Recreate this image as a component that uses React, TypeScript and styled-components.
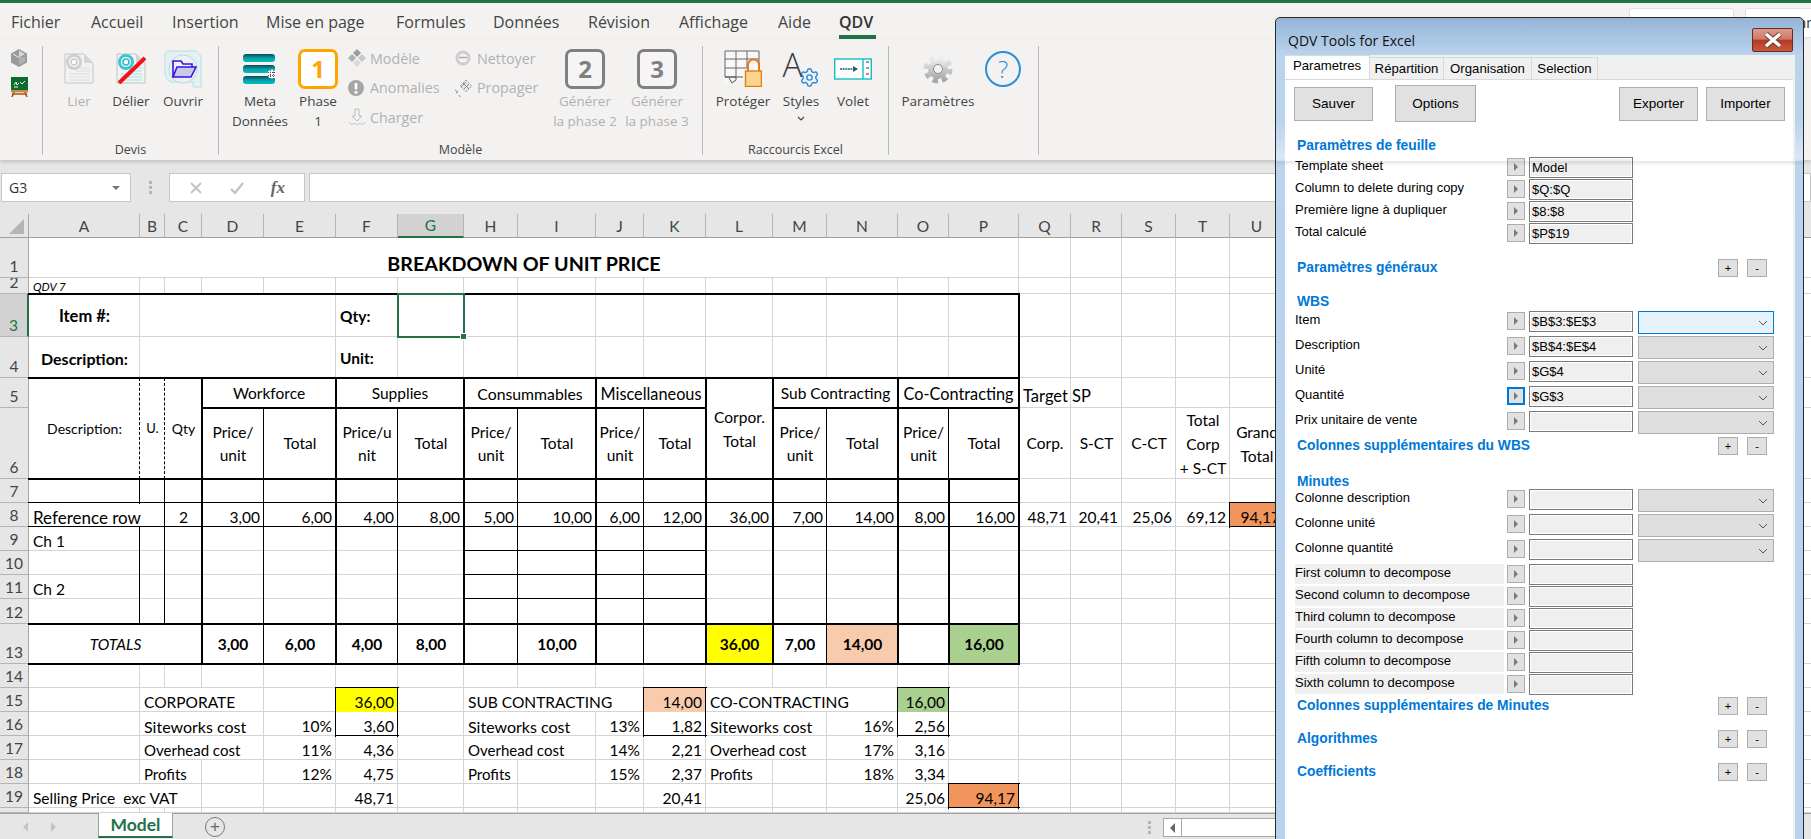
import * as React from 'react';
import styled, { createGlobalStyle, css } from 'styled-components';
import { Settings } from 'lucide-react';

type Edge = 'grid' | 'thin' | 'med' | 'dash' | 'none';
type Align = 'l' | 'r' | 'c';

interface CellDef {
    t?: string;
    a?: Align;
    mid?: boolean;
    b?: boolean;
    i?: boolean;
    size?: number;
    lh?: number;
    fill?: string;
    rs?: number;
    cs?: number;
    selected?: boolean;
}

const GREEN = '#217346';
const ORANGE = '#f0955b';

const COLS = 'ABCDEFGHIJKLMNOPQRSTUVWXYZ'.split('');
const COL_W = [111, 25, 37, 62, 72, 62, 66, 54, 78, 48, 62, 67, 54, 71, 51, 70, 52, 51, 54, 54, 54, 106, 106, 106, 106, 106];
const ROW_H = [40, 16, 43, 41, 30, 71, 24, 24, 24, 24, 24, 25, 40, 24, 24, 24, 24, 24, 24, 5];

const GlobalStyle = createGlobalStyle`
    html, body {
        margin: 0;
        padding: 0;
        overflow: hidden;
        background: #fff;
    }
`;

const Screen = styled.div`
    position: relative;
    width: 1811px;
    height: 839px;
    overflow: hidden;
    display: flex;
    flex-direction: column;
    font-family: 'Open Sans', 'Noto Sans', sans-serif;
`;

const AccentBar = styled.div`
    height: 3px;
    background: ${GREEN};
`;

const MenuRow = styled.div`
    height: 37px;
    background: #f3f2f1;
    display: flex;
    padding-left: 11px;
`;

const MenuTab = styled.div<{ $w: number; $active?: boolean }>`
    position: relative;
    width: ${p => p.$w}px;
    flex: none;
    font-size: 16px;
    line-height: 38px;
    color: ${p => (p.$active ? '#333' : '#444')};
    font-weight: ${p => (p.$active ? 600 : 400)};
    ${p =>
        p.$active &&
        css`
            &::after {
                content: '';
                position: absolute;
                left: 0;
                top: 32px;
                width: 37px;
                height: 4px;
                background: ${GREEN};
            }
        `}
`;

const ShareBox = styled.div<{ $w: number; $ml: number }>`
    width: ${p => p.$w}px;
    margin-left: ${p => p.$ml}px;
    margin-top: 5px;
    height: 30px;
    flex: none;
    background: #fff;
    border: 1px solid #e1dfdd;
    border-radius: 3px;
    box-sizing: border-box;
    font-size: 14px;
    line-height: 28px;
    padding-left: 30px;
    color: #333;
    white-space: nowrap;
    overflow: hidden;
`;

const Ribbon = styled.div`
    position: relative;
    z-index: 5;
    height: 120px;
    background: #f3f2f1;
    display: flex;
    padding-top: 6px;
    box-sizing: border-box;
    box-shadow: 0 2px 4px rgba(0, 0, 0, 0.16);
`;

const Group = styled.div<{ $w: number }>`
    width: ${p => p.$w}px;
    height: 109px;
    flex: none;
    box-sizing: border-box;
    border-right: 1px solid #b9b9b9;
    display: flex;
    flex-direction: column;
`;

const GroupBody = styled.div<{ $pl: number }>`
    flex: 1;
    display: flex;
    padding-left: ${p => p.$pl}px;
`;

const GroupLabel = styled.div`
    font-size: 12.5px;
    line-height: 16px;
    margin-bottom: -3px;
    text-align: center;
    color: #444;
`;

const BigButton = styled.div<{ $w: number; $off?: boolean }>`
    width: ${p => p.$w}px;
    flex: none;
    display: flex;
    flex-direction: column;
    align-items: center;
    text-align: center;
    font-size: 13.5px;
    line-height: 20px;
    white-space: nowrap;
    color: ${p => (p.$off ? '#b1b1b1' : '#444')};
`;

const BigIcon = styled.div`
    height: 45px;
    display: flex;
    align-items: center;
    justify-content: center;
`;

const PhaseBadge = styled.div<{ $tone: string }>`
    width: 40px;
    height: 40px;
    box-sizing: border-box;
    border: 3px solid ${p => p.$tone};
    border-radius: 7px;
    background: ${p => (p.$tone === '#808080' ? '#f7f4f8' : '#fff')};
    color: ${p => p.$tone};
    font-size: 24px;
    font-weight: 700;
    line-height: 33px;
    text-align: center;
`;

const SmallColumn = styled.div<{ $w: number; $pl?: number }>`
    width: ${p => p.$w}px;
    flex: none;
    box-sizing: border-box;
    padding-left: ${p => p.$pl || 0}px;
    display: flex;
    flex-direction: column;
    gap: 5.5px;
`;

const SmallButton = styled.div`
    height: 24px;
    display: flex;
    align-items: center;
    font-size: 14.3px;
    color: #b1b1b1;
    white-space: nowrap;
`;

const SmallIcon = styled.div`
    width: 22px;
    flex: none;
    display: flex;
`;

const SideIcons = styled.div`
    display: flex;
    flex-direction: column;
    gap: 10px;
    padding: 3px 0 0 11px;
`;

const HelpBadge = styled.div`
    width: 36px;
    height: 36px;
    box-sizing: border-box;
    border: 2px solid #2b8ed8;
    border-radius: 50%;
    color: #2b8ed8;
    font-size: 24px;
    font-weight: 300;
    line-height: 31px;
    text-align: center;
`;

const StylesCaret = styled.svg`
    margin-top: 5px;
`;

const FormulaRow = styled.div`
    height: 54px;
    background: #e6e6e6;
    display: flex;
    align-items: flex-start;
    padding-top: 13px;
    box-sizing: border-box;
    padding-left: 1px;
`;

const NameBox = styled.div`
    width: 130px;
    height: 29px;
    box-sizing: border-box;
    background: #fff;
    border: 1px solid #c6c6c6;
    display: flex;
    align-items: center;
    justify-content: space-between;
    padding: 0 10px 0 7px;
    font-size: 14px;
    color: #333;
`;

const Caret = styled.span`
    width: 0;
    height: 0;
    border: 4px solid transparent;
    border-top: 4px solid #777;
    border-bottom: none;
`;

const Grip = styled.div`
    width: 38px;
    height: 29px;
    flex: none;
    display: flex;
    flex-direction: column;
    align-items: center;
    justify-content: center;
    gap: 2px;
    & > i {
        width: 3px;
        height: 3px;
        background: #b5b5b5;
    }
`;

const FormulaTools = styled.div`
    width: 136px;
    height: 29px;
    box-sizing: border-box;
    background: #fff;
    border: 1px solid #c6c6c6;
    display: flex;
    align-items: center;
    justify-content: space-around;
    padding: 0 6px;
    color: #bdbdbd;
`;

const FxLabel = styled.span`
    font-family: 'Liberation Serif', serif;
    font-style: italic;
    font-weight: 700;
    font-size: 17px;
    color: #666;
`;

const FormulaInput = styled.div`
    flex: 1;
    height: 29px;
    margin-left: 4px;
    box-sizing: border-box;
    background: #fff;
    border: 1px solid #c6c6c6;
`;

const SheetGrid = styled.div`
    flex: none;
    display: grid;
    grid-template-columns: 29px ${COL_W.map(w => `${w}px`).join(' ')};
    grid-template-rows: 24px ${ROW_H.map(h => `${h}px`).join(' ')};
    background: #fff;
    font-family: Lato, 'Liberation Sans', sans-serif;
    color: #000;
`;

const Corner = styled.div`
    background: #e6e6e6;
    border-right: 1px solid #a8a8a8;
    border-bottom: 1px solid #a0a0a0;
    box-sizing: border-box;
    display: flex;
    align-items: flex-end;
    justify-content: flex-end;
    padding: 0 4px 3px 0;
    &::after {
        content: '';
        border-style: solid;
        border-width: 0 0 15px 15px;
        border-color: transparent transparent #b5b5b5 transparent;
    }
`;

const ColHeader = styled.div<{ $on: boolean }>`
    box-sizing: border-box;
    background: ${p => (p.$on ? '#d2d2d2' : '#e6e6e6')};
    border-right: 1px solid #b4b4b4;
    border-bottom: ${p => (p.$on ? `2px solid ${GREEN}` : '1px solid #a0a0a0')};
    color: ${p => (p.$on ? GREEN : '#444')};
    font-size: 15.5px;
    display: flex;
    align-items: center;
    justify-content: center;
`;

const RowHeader = styled.div<{ $on: boolean }>`
    box-sizing: border-box;
    background: ${p => (p.$on ? '#d2d2d2' : '#e6e6e6')};
    border-right: ${p => (p.$on ? `2px solid ${GREEN}` : '1px solid #a8a8a8')};
    border-bottom: 1px solid #b4b4b4;
    color: ${p => (p.$on ? GREEN : '#444')};
    font-size: 15.5px;
    line-height: 17px;
    overflow: hidden;
    display: flex;
    align-items: flex-end;
    justify-content: center;
    padding-bottom: 2px;
`;

const rightEdge = (e: Edge) => {
    if (e === 'none') return 'display: none;';
    if (e === 'grid') return 'right: 0; border-right: 1px solid #d4d4d4;';
    if (e === 'thin') return 'right: 0; top: -1px; bottom: -1px; z-index: 2; border-right: 1px solid #000;';
    if (e === 'dash') return 'right: 0; z-index: 2; border-right: 1px dashed #000;';
    return 'right: -1px; top: -1px; bottom: -1px; z-index: 2; border-right: 2px solid #000;';
};

const bottomEdge = (e: Edge) => {
    if (e === 'none') return 'display: none;';
    if (e === 'grid') return 'bottom: 0; border-bottom: 1px solid #d4d4d4;';
    if (e === 'thin') return 'bottom: 0; left: -1px; right: -1px; z-index: 2; border-bottom: 1px solid #000;';
    return 'bottom: -1px; left: -1px; right: -1px; z-index: 2; border-bottom: 2px solid #000;';
};

const SheetCell = styled.div<{
    $r: Edge;
    $bt: Edge;
    $a: Align;
    $mid?: boolean;
    $b?: boolean;
    $i?: boolean;
    $size?: number;
    $lh?: number;
    $fill?: string;
    $rs: number;
    $cs: number;
}>`
    position: relative;
    grid-row: span ${p => p.$rs};
    grid-column: span ${p => p.$cs};
    box-sizing: border-box;
    display: flex;
    padding: 0 4px;
    white-space: pre;
    font-size: ${p => p.$size || 15.5}px;
    line-height: ${p => p.$lh || 19}px;
    font-weight: ${p => (p.$b ? 700 : 400)};
    font-style: ${p => (p.$i ? 'italic' : 'normal')};
    background: ${p => p.$fill || 'transparent'};
    text-align: ${p => (p.$a === 'c' ? 'center' : p.$a === 'r' ? 'right' : 'left')};
    align-items: ${p => (p.$mid ? 'center' : 'flex-end')};
    justify-content: ${p => (p.$a === 'c' ? 'center' : p.$a === 'r' ? 'flex-end' : 'flex-start')};
    &::before {
        content: '';
        position: absolute;
        top: 0;
        bottom: 0;
        z-index: 1;
        ${p => rightEdge(p.$r)}
    }
    &::after {
        content: '';
        position: absolute;
        left: 0;
        right: 0;
        z-index: 1;
        ${p => bottomEdge(p.$bt)}
    }
`;

const Selection = styled.div`
    position: absolute;
    inset: -1px -1px -1px -1px;
    border: 2px solid ${GREEN};
    z-index: 3;
    &::after {
        content: '';
        position: absolute;
        right: -4px;
        bottom: -4px;
        width: 5px;
        height: 5px;
        background: ${GREEN};
        border: 1px solid #fff;
    }
`;

const TabsBar = styled.div`
    flex: 1;
    background: #e6e6e6;
    border-top: 1px solid #a0a0a0;
    box-sizing: border-box;
    display: flex;
    align-items: flex-start;
    font-family: Lato, 'Liberation Sans', sans-serif;
`;

const NavArrows = styled.div`
    width: 98px;
    height: 25px;
    flex: none;
    display: flex;
    align-items: center;
    gap: 23px;
    padding-left: 23px;
    box-sizing: border-box;
`;

const NavArrow = styled.span<{ $dir: 'l' | 'r' }>`
    width: 0;
    height: 0;
    border-top: 5px solid transparent;
    border-bottom: 5px solid transparent;
    ${p => (p.$dir === 'l' ? 'border-right: 5px solid #c4c4c4;' : 'border-left: 5px solid #c4c4c4;')}
`;

const SheetTab = styled.div`
    width: 75px;
    height: 25px;
    margin-top: -1px;
    flex: none;
    box-sizing: border-box;
    background: #fff;
    border: 1px solid #a0a0a0;
    border-top: none;
    border-bottom: 2px solid ${GREEN};
    color: ${GREEN};
    font-weight: 700;
    font-size: 17.5px;
    line-height: 23px;
    text-align: center;
`;

const AddSheet = styled.div`
    width: 20px;
    height: 20px;
    margin: 3px 0 0 32px;
    flex: none;
    border-radius: 50%;
    box-sizing: border-box;
    border: 1.5px solid #777;
    color: #666;
    display: flex;
    align-items: center;
    justify-content: center;
    font-size: 17px;
    line-height: 16px;
    font-family: 'Liberation Sans', sans-serif;
`;

const ScrollGrip = styled(Grip)`
    width: 6px;
    height: 20px;
    margin: 3px 0 0 921px;
`;

const ScrollTrack = styled.div`
    width: 640px;
    height: 19px;
    margin: 4px 0 0 11px;
    flex: none;
    box-sizing: border-box;
    background: #fff;
    border: 1px solid #a8a8a8;
    display: flex;
`;

const ScrollBack = styled.div`
    width: 18px;
    box-sizing: border-box;
    border-right: 1px solid #a8a8a8;
    display: flex;
    align-items: center;
    justify-content: center;
    &::after {
        content: '';
        border-top: 5px solid transparent;
        border-bottom: 5px solid transparent;
        border-right: 5px solid #666;
    }
`;

/* floating QDV task pane */
const PaneWindow = styled.div`
    position: absolute;
    z-index: 10;
    left: 1275px;
    top: 17px;
    width: 529px;
    height: 840px;
    box-sizing: border-box;
    border: 1px solid #2a2a2a;
    border-radius: 5px 5px 0 0;
    padding: 0 8px 0 9px;
    display: flex;
    flex-direction: column;
    background: linear-gradient(
        180deg,
        #95b4d6 0,
        #bbd4ee 38px,
        #bbd4ee 105px,
        #dbe7f3 140px,
        #bad3ee 146px,
        #b9d3ee 100%
    );
    font-family: 'Liberation Sans', Arial, sans-serif;
    color: #000;
`;

const GlassBand = styled.div`
    position: absolute;
    left: 0;
    right: 0;
    top: 143px;
    height: 5px;
    background: linear-gradient(180deg, rgba(0, 0, 0, 0.1), rgba(0, 0, 0, 0));
    pointer-events: none;
`;

const PaneTitleBar = styled.div`
    height: 37px;
    flex: none;
    display: flex;
    justify-content: space-between;
    padding-left: 3px;
`;

const PaneTitle = styled.div`
    font-family: 'Open Sans', sans-serif;
    font-size: 14px;
    line-height: 46px;
    color: #111;
`;

const CloseButton = styled.div`
    width: 41px;
    height: 24px;
    margin: 10px 2px 0 0;
    box-sizing: border-box;
    border: 1px solid #6f2b22;
    border-radius: 2px;
    background: linear-gradient(180deg, #dc9a8e 0, #cf7a6a 45%, #b63a22 52%, #c95a43 100%);
    display: flex;
    align-items: center;
    justify-content: center;
`;

const PaneBody = styled.div`
    flex: 1;
    display: flex;
    flex-direction: column;
    background: #f0f0f0;
    min-height: 0;
`;

const PaneTabs = styled.div`
    height: 24px;
    flex: none;
    display: flex;
    align-items: flex-end;
`;

const PaneTab = styled.div<{ $w: number; $active?: boolean }>`
    width: ${p => p.$w}px;
    height: ${p => (p.$active ? 24 : 22)}px;
    box-sizing: border-box;
    flex: none;
    font-size: 13.2px;
    line-height: ${p => (p.$active ? 20 : 22)}px;
    text-align: center;
    background: ${p => (p.$active ? '#fff' : '#f0f0f0')};
    border: 1px solid #d9d9d9;
    border-left: ${p => (p.$active ? 'none' : '1px solid #d9d9d9')};
    border-bottom: none;
    margin-left: ${p => (p.$active ? 0 : -1)}px;
`;

const PanePage = styled.div`
    flex: 1;
    margin-right: 2px;
    background: #fff;
    border-top: 1px solid #d9d9d9;
    display: flex;
    flex-direction: column;
    padding-left: 10px;
    box-sizing: border-box;
`;

const ActionRow = styled.div`
    height: 37px;
    margin-top: 5px;
    flex: none;
    display: flex;
    align-items: center;
    padding-right: 8px;
`;

const ActionButton = styled.div<{ $w: number; $h: number; $ml: number; $push?: boolean }>`
    width: ${p => p.$w}px;
    height: ${p => p.$h}px;
    margin-left: ${p => (p.$push ? 'auto' : `${p.$ml}px`)};
    flex: none;
    box-sizing: border-box;
    background: #e1e1e1;
    border: 1px solid #adadad;
    font-size: 13.5px;
    display: flex;
    align-items: center;
    justify-content: center;
`;

const SectionHead = styled.div<{ $mt: number; $mb?: number }>`
    height: 18px;
    margin-top: ${p => p.$mt}px;
    margin-bottom: ${p => p.$mb || 0}px;
    flex: none;
    display: flex;
    align-items: center;
    justify-content: space-between;
    padding: 0 26px 0 2px;
`;

const SectionTitle = styled.div`
    font-size: 13.8px;
    font-weight: 700;
    color: #0078d7;
    margin-bottom: 2px;
    white-space: nowrap;
`;

const StepButtons = styled.div`
    display: flex;
    gap: 9px;
`;

const StepButton = styled.div`
    width: 20px;
    height: 18px;
    box-sizing: border-box;
    background: #e1e1e1;
    border: 1px solid #adadad;
    font-size: 11px;
    line-height: 16px;
    text-align: center;
`;

const FieldRow = styled.div<{ $h: number }>`
    height: ${p => p.$h}px;
    flex: none;
    display: grid;
    grid-template-columns: 209px 21px 108px 141px;
    align-items: start;
`;

const FieldLabel = styled.div<{ $shaded?: boolean }>`
    height: 20px;
    font-size: 13px;
    line-height: 18px;
    background: ${p => (p.$shaded ? '#f0f0f0' : 'transparent')};
    white-space: nowrap;
`;

const ArrowButton = styled.div<{ $on?: boolean }>`
    width: 18px;
    height: 18px;
    margin: 1px 0 0 3px;
    box-sizing: border-box;
    background: #e1e1e1;
    border: ${p => (p.$on ? '2px solid #0078d7' : '1px solid #adadad')};
    display: flex;
    align-items: center;
    justify-content: center;
    &::after {
        content: '';
        border-top: 4px solid transparent;
        border-bottom: 4px solid transparent;
        border-left: 4px solid #7a7a7a;
    }
`;

const RangeInput = styled.div`
    width: 104px;
    height: 21px;
    margin-left: 4px;
    box-sizing: border-box;
    background: #efefef;
    border: 1px solid #7a7a7a;
    box-shadow: inset 0 0 0 1px #fff;
    font-size: 13px;
    line-height: 20px;
    padding-left: 2px;
`;

const ComboBox = styled.div<{ $on?: boolean }>`
    width: 136px;
    height: 23px;
    margin-left: 5px;
    box-sizing: border-box;
    background: ${p => (p.$on ? '#e5f1fb' : '#dedede')};
    border: 1px solid ${p => (p.$on ? '#0078d7' : '#adadad')};
    display: flex;
    align-items: center;
    justify-content: flex-end;
    padding-right: 5px;
`;

const Chevron = () => (
    <svg width="10" height="6" viewBox="0 0 10 6">
        <path d="M1 1l4 4 4-4" fill="none" stroke="#555" strokeWidth="1" />
    </svg>
);

const HexIcon = () => (
    <svg width="16" height="18" viewBox="0 0 16 18">
        <path d="M8 0l8 4.5v9L8 18l-8-4.5v-9z" fill="#9a9a9a" />
        <path d="M8 1.5L14 5 8 8.5z" fill="#d8d8d8" />
        <path d="M8 8.5V16l6-3.5V8z" fill="#b0b0b0" />
        <path d="M2 5l6 3.5" stroke="#eee" />
    </svg>
);

const BoardIcon = () => (
    <svg width="17" height="20" viewBox="0 0 17 20">
        <path d="M3 15L1 20M14 15l2 5M1 17h15" stroke="#a5541a" strokeWidth="1.6" fill="none" />
        <rect x="0" y="0" width="17" height="14" fill="#0c6b2d" />
        <rect x="0" y="13" width="17" height="2.4" fill="#c98a3c" />
        <path d="M3 8l2-3 1 3 2-2M9 5l2 2 3-3M3 10h4" stroke="#eaf7ea" strokeWidth="1" fill="none" />
    </svg>
);

const DocIcon = ({ tone, line, slash }: { tone: string; line: string; slash?: boolean }) => (
    <svg width="30" height="31" viewBox="0 0 30 31">
        <path d="M1 1h19l9 9v20H1z" fill="#f2f2f2" stroke="#c4c4c4" />
        <path d="M20 1v9h9z" fill="#d6d6d6" />
        <path d="M12 15h14M12 18h14M5 21h21M5 24h21M5 27h21" stroke={line} />
        <circle cx="10" cy="9" r="8" fill={tone} opacity="0.85" />
        <circle cx="10" cy="9" r="5" fill="#fff" />
        <circle cx="10" cy="9" r="3" fill="none" stroke={tone} strokeWidth="1.6" />
        {slash && <path d="M3 30L29 5" stroke="#f01414" strokeWidth="4" />}
    </svg>
);

const OpenIcon = () => (
    <svg width="38" height="38" viewBox="0 0 38 38">
        <path d="M1 6Q1 1 6 1h26l5 5v31h-8v-5H8Q1 30 1 22z" fill="#e3f1f3" stroke="#b5dfe4" />
        <circle cx="19" cy="19" r="14" fill="#eef1f2" stroke="#bcd8dc" />
        <path d="M9 27V11h8l2 3h9v3" fill="none" stroke="#3b10e3" strokeWidth="1.6" />
        <path d="M9 27l4-10h19l-5 10z" fill="#c9c9e8" stroke="#3b10e3" strokeWidth="1.6" />
    </svg>
);

const MetaIcon = () => (
    <svg width="34" height="30" viewBox="0 0 34 30">
        <defs>
            <linearGradient id="metaBar" x1="0" y1="0" x2="0" y2="1">
                <stop offset="0" stopColor="#0b4a55" />
                <stop offset="0.55" stopColor="#06a4aa" />
                <stop offset="1" stopColor="#00bcc0" />
            </linearGradient>
        </defs>
        <rect x="0" y="0" width="32" height="8" rx="3" fill="url(#metaBar)" />
        <rect x="0" y="11" width="32" height="8" rx="3" fill="url(#metaBar)" />
        <rect x="0" y="22" width="32" height="8" rx="3" fill="url(#metaBar)" />
        <circle cx="29" cy="20" r="4.6" fill="#fff" />
        <path d="M25 18.5h8M25 21.5h8M27.5 16v8M30.5 16v8" stroke="#555" strokeDasharray="1 1" />
    </svg>
);

const DiamondIcon = () => (
    <svg width="18" height="18" viewBox="0 0 18 18">
        <path d="M9 0l4 4-4 4-4-4z" fill="#9c9c9c" />
        <path d="M4 5l4 4-4 4-4-4z" fill="#b0b0b0" />
        <path d="M14 5l4 4-4 4-4-4z" fill="#c8c8c8" />
        <path d="M9 10l4 4-4 4-4-4z" fill="#dadada" />
    </svg>
);

const AlertIcon = () => (
    <svg width="16" height="16" viewBox="0 0 16 16">
        <circle cx="8" cy="8" r="8" fill="#a6a6a6" />
        <path d="M8 3v6.4" stroke="#fff" strokeWidth="2.6" />
        <circle cx="8" cy="12.2" r="1.5" fill="#fff" />
    </svg>
);

const LoadIcon = () => (
    <svg width="18" height="18" viewBox="0 0 18 18">
        <path d="M7 1h4v7h3l-5 5-5-5h3z" fill="none" stroke="#bdbdbd" />
        <path d="M1 14c2 3 3 3 5 1 2 2 4 2 6 0 2 2 3 2 5-1" fill="none" stroke="#bdbdbd" />
    </svg>
);

const ClockIcon = () => (
    <svg width="16" height="16" viewBox="0 0 16 16">
        <circle cx="8" cy="8" r="7.5" fill="#d0ccce" />
        <circle cx="8" cy="8" r="4.6" fill="#f4f2f3" />
        <path d="M4 7.5h8" stroke="#a9a5a7" strokeWidth="1.4" />
    </svg>
);

const SpreadIcon = () => (
    <svg width="18" height="18" viewBox="0 0 18 18">
        <path d="M11 1l6 6-6 6-6-6z" fill="#e6e6e6" stroke="#9a9a9a" strokeDasharray="1.5 1" />
        <path d="M8 4l6 6M11 3l-5 5M14 5l-5 5" stroke="#8d8d8d" />
        <path d="M0 11l3 2-2 1M4 16l1 2" stroke="#8d8d8d" fill="none" />
    </svg>
);

const ProtectIcon = () => (
    <svg width="38" height="37" viewBox="0 0 38 37">
        <path d="M1 1h33v24h-4v5H11l-4 0-6 3z" fill="#f8f8f8" />
        <path d="M1 27V1h34v20M1 9h34M1 18h24M12 1v26M23 1v17" fill="none" stroke="#666" strokeWidth="1" />
        <path d="M1 27h11v3l-4 3-3-5" fill="none" stroke="#555" />
        <path d="M1 27h18" stroke="#555" />
        <path d="M24 21v-6a5.5 5.5 0 0 1 11 0v6" fill="none" stroke="#e8781e" strokeWidth="2" />
        <rect x="21.5" y="21" width="16" height="15.5" fill="#fbd58c" stroke="#e8781e" strokeWidth="1.4" />
    </svg>
);

const StylesWrap = styled.div`
    height: 38px;
    width: 37px;
    display: flex;
    align-items: flex-end;
    justify-content: flex-end;
    position: relative;
`;

const StylesLetter = styled.span`
    position: absolute;
    left: 0;
    top: -4px;
    font-family: 'Open Sans', sans-serif;
    font-weight: 300;
    font-size: 33px;
    line-height: 38px;
    color: #3c3c3c;
`;

const StylesIcon = () => (
    <StylesWrap>
        <StylesLetter>A</StylesLetter>
        <Settings size={21} color="#2b88d8" strokeWidth={1.6} />
    </StylesWrap>
);

const PaneIcon = () => (
    <svg width="38" height="22" viewBox="0 0 38 22">
        <rect x="0.7" y="1" width="36.6" height="20" fill="#fff" stroke="#10c0c0" strokeWidth="1.4" />
        <path d="M29 1v20" stroke="#10c0c0" strokeWidth="1.4" />
        <path d="M6 11h17" stroke="#1d6170" strokeWidth="1.4" strokeDasharray="2 0.6" />
        <path d="M19 8l5 3-5 3z" fill="#1d6170" />
        <path d="M32 4h3M32 10h3M32 16h3" stroke="#333" strokeWidth="1.2" />
    </svg>
);

const GearIcon = () => (
    <svg width="30" height="30" viewBox="0 0 30 30">
        <defs>
            <linearGradient id="gearFill" x1="0" y1="0" x2="0" y2="1">
                <stop offset="0" stopColor="#ededed" />
                <stop offset="1" stopColor="#a8a8a8" />
            </linearGradient>
        </defs>
        <circle cx="15" cy="15" r="11.5" fill="none" stroke="url(#gearFill)" strokeWidth="6" strokeDasharray="5 4.03" />
        <circle cx="15" cy="15" r="10" fill="url(#gearFill)" />
        <circle cx="15" cy="15" r="4.5" fill="#f3f2f1" stroke="#8a8a8a" />
    </svg>
);

const XIcon = () => (
    <svg width="14" height="14" viewBox="0 0 14 14">
        <path d="M2 2l10 10M12 2L2 12" stroke="#c4c4c4" strokeWidth="2" fill="none" />
    </svg>
);

const CheckIcon = () => (
    <svg width="16" height="14" viewBox="0 0 16 14">
        <path d="M2 8l4 4 8-10" stroke="#c4c4c4" strokeWidth="2.4" fill="none" />
    </svg>
);

const CloseGlyph = () => (
    <svg width="20" height="16" viewBox="0 0 20 16">
        <path d="M3 2l14 12M17 2L3 14" stroke="#6a3a32" strokeWidth="5.4" fill="none" />
        <path d="M3 2l14 12M17 2L3 14" stroke="#fff" strokeWidth="3.6" fill="none" />
    </svg>
);

/* sheet model: cell contents, merged ranges and borders */
const cells: Record<string, CellDef> = {
    A1: { t: 'BREAKDOWN OF UNIT PRICE', a: 'c', b: true, size: 19.7, lh: 28, cs: 16 },
    A2: { t: 'QDV 7', i: true, size: 11.5, lh: 15 },
    A3: { t: 'Item #:', a: 'c', b: true, size: 16.5, lh: 41 },
    B3: { cs: 4 },
    F3: { t: 'Qty:', b: true, lh: 41 },
    G3: { selected: true },
    A4: { t: 'Description:', a: 'c', b: true, size: 16, lh: 39 },
    B4: { cs: 4 },
    F4: { t: 'Unit:', b: true, lh: 39 },
    A5: { t: 'Description:', a: 'c', mid: true, size: 14, rs: 2 },
    B5: { t: 'U.', a: 'c', mid: true, size: 13, rs: 2 },
    C5: { t: 'Qty', a: 'c', mid: true, size: 14, rs: 2 },
    D5: { t: 'Workforce', a: 'c', mid: true, cs: 2 },
    F5: { t: 'Supplies', a: 'c', mid: true, cs: 2 },
    H5: { t: 'Consummables', a: 'c', mid: true, cs: 2, size: 15.8 },
    J5: { t: 'Miscellaneous', a: 'c', mid: true, cs: 2, size: 16.3 },
    L5: { t: 'Corpor.\nTotal', a: 'c', mid: true, lh: 24, rs: 2 },
    M5: { t: 'Sub Contracting', a: 'c', mid: true, cs: 2 },
    O5: { t: 'Co-Contracting', a: 'c', mid: true, cs: 2, size: 16.3 },
    Q5: { t: 'Target SP', size: 16.5, lh: 23 },
    A8: { t: 'Reference row', size: 17 },
    C8: { t: '2', a: 'c' },
    A9: { t: 'Ch 1' },
    A11: { t: 'Ch 2' },
    A13: { t: 'TOTALS', a: 'c', i: true, mid: true, cs: 3 },
    B15: { t: 'CORPORATE' },
    B16: { t: 'Siteworks cost', size: 16 },
    B17: { t: 'Overhead cost', size: 15 },
    B18: { t: 'Profits', size: 15 },
    A19: { t: 'Selling Price  exc VAT' },
    H15: { t: 'SUB CONTRACTING' },
    H16: { t: 'Siteworks cost', size: 16 },
    H17: { t: 'Overhead cost', size: 15 },
    H18: { t: 'Profits', size: 15 },
    L15: { t: 'CO-CONTRACTING' },
    L16: { t: 'Siteworks cost', size: 16 },
    L17: { t: 'Overhead cost', size: 15 },
    L18: { t: 'Profits', size: 15 },
};

const put = (key: string, t: string, extra: CellDef = {}) => {
    cells[key] = { t, a: 'r', ...extra };
};

// row 6 headings
['D', 'H', 'J', 'M', 'O'].forEach(c => (cells[`${c}6`] = { t: 'Price/\nunit', a: 'c', mid: true, lh: 23 }));
cells.F6 = { t: 'Price/u\nnit', a: 'c', mid: true, lh: 23 };
['E', 'G', 'I', 'K', 'N', 'P'].forEach(c => (cells[`${c}6`] = { t: 'Total', a: 'c', mid: true }));
cells.Q6 = { t: 'Corp.', a: 'c', mid: true };
cells.R6 = { t: 'S-CT', a: 'c', mid: true };
cells.S6 = { t: 'C-CT', a: 'c', mid: true };
cells.T6 = { t: 'Total\nCorp\n+ S-CT', a: 'c', mid: true, lh: 24 };
cells.U6 = { t: 'Grand\nTotal', a: 'c', mid: true, lh: 24 };

// reference row
const ROW8: [string, string][] = [
    ['D', '3,00'], ['E', '6,00'], ['F', '4,00'], ['G', '8,00'], ['H', '5,00'], ['I', '10,00'], ['J', '6,00'], ['K', '12,00'],
    ['L', '36,00'], ['M', '7,00'], ['N', '14,00'], ['O', '8,00'], ['P', '16,00'], ['Q', '48,71'], ['R', '20,41'], ['S', '25,06'], ['T', '69,12'],
];
ROW8.forEach(([c, t]) => put(`${c}8`, t));
put('U8', '94,17', { fill: ORANGE });

// totals
const ROW13: [string, string, string?][] = [
    ['D', '3,00'], ['E', '6,00'], ['F', '4,00'], ['G', '8,00'], ['I', '10,00'], ['L', '36,00', '#ffff00'], ['M', '7,00'], ['N', '14,00', '#f8cbad'], ['P', '16,00', '#a9d08e'],
];
ROW13.forEach(([c, t, fill]) => {
    cells[`${c}13`] = { t, a: 'c', b: true, mid: true, fill };
});

// summary block
put('F15', '36,00', { fill: '#ffff00' });
put('E16', '10%');
put('F16', '3,60');
put('E17', '11%');
put('F17', '4,36');
put('E18', '12%');
put('F18', '4,75');
put('F19', '48,71');
put('K15', '14,00', { fill: '#f8cbad' });
put('J16', '13%');
put('K16', '1,82');
put('J17', '14%');
put('K17', '2,21');
put('J18', '15%');
put('K18', '2,37');
put('K19', '20,41');
put('O15', '16,00', { fill: '#a9d08e' });
put('N16', '16%');
put('O16', '2,56');
put('N17', '17%');
put('O17', '3,16');
put('N18', '18%');
put('O18', '3,34');
put('O19', '25,06');
put('P19', '94,17', { fill: ORANGE });

const right: Record<string, Edge> = {};
const bottom: Record<string, Edge> = {};

const vline = (c: string, r1: number, r2: number, e: Edge) => {
    for (let r = r1; r <= r2; r++) right[`${c}${r}`] = e;
};
const hline = (r: number, c1: string, c2: string, e: Edge) => {
    for (let i = COLS.indexOf(c1); i <= COLS.indexOf(c2); i++) bottom[`${COLS[i]}${r}`] = e;
};

[2, 4, 6, 12, 13].forEach(r => hline(r, 'A', 'P', 'med'));
hline(5, 'D', 'K', 'med');
hline(5, 'M', 'P', 'med');
[7, 8].forEach(r => hline(r, 'A', 'P', 'thin'));
[9, 10, 11].forEach(r => hline(r, 'H', 'K', 'thin'));
['C', 'E', 'G', 'I', 'K', 'L', 'N'].forEach(c => vline(c, 5, 13, 'med'));
vline('P', 3, 13, 'med');
vline('O', 6, 6, 'thin');
vline('O', 7, 13, 'med');
['D', 'F', 'H', 'J', 'M'].forEach(c => vline(c, 6, 13, 'thin'));
vline('A', 5, 6, 'dash');
vline('B', 5, 6, 'dash');
vline('A', 7, 12, 'thin');
vline('B', 7, 12, 'thin');
vline('A', 8, 8, 'none');
[15, 16, 17].forEach(r => {
    vline('B', r, r, 'none');
    vline('C', r, r, 'none');
});
vline('B', 18, 18, 'none');
vline('A', 19, 19, 'none');
vline('B', 19, 19, 'none');
['H', 'I'].forEach(c => vline(c, 15, 15, 'none'));
vline('H', 16, 17, 'none');
['L', 'M'].forEach(c => vline(c, 15, 15, 'none'));
vline('L', 16, 17, 'none');
[['E', 'F'], ['J', 'K'], ['N', 'O']].forEach(([l, c]) => {
    vline(l, 15, 16, 'thin');
    vline(c, 15, 16, 'thin');
    hline(14, c, c, 'thin');
    hline(15, c, c, 'none');
    hline(16, c, c, 'thin');
});
vline('O', 19, 19, 'thin');
vline('P', 19, 19, 'thin');
hline(18, 'P', 'P', 'thin');
hline(19, 'P', 'P', 'thin');
vline('T', 8, 8, 'thin');
hline(7, 'U', 'U', 'thin');
hline(8, 'U', 'U', 'thin');

const renderSheet = () => {
    const out: React.ReactNode[] = [<Corner key="corner" />];
    // letters past U sit under the pane and are never seen
    COLS.forEach((c, ci) => (
        out.push(<ColHeader key={c} $on={c === 'G'}>{ci <= 20 ? c : ''}</ColHeader>)
    ));
    const covered = new Set<string>();
    ROW_H.forEach((_, ri) => {
        const r = ri + 1;
        out.push(<RowHeader key={`h${r}`} $on={r === 3}>{r < 20 ? r : ''}</RowHeader>);
        COLS.forEach((c, ci) => {
            const key = `${c}${r}`;
            if (covered.has(key)) return;
            const def = cells[key] || {};
            const rs = def.rs || 1;
            const cs = def.cs || 1;
            for (let y = 0; y < rs; y++) {
                for (let x = 0; x < cs; x++) covered.add(`${COLS[ci + x]}${r + y}`);
            }
            const lastKey = `${COLS[ci + cs - 1]}${r + rs - 1}`;
            out.push(
                <SheetCell
                    key={key}
                    $r={right[lastKey] || 'grid'}
                    $bt={bottom[lastKey] || 'grid'}
                    $a={def.a || 'l'}
                    $mid={def.mid}
                    $b={def.b}
                    $i={def.i}
                    $size={def.size}
                    $lh={def.lh}
                    $fill={def.fill}
                    $rs={rs}
                    $cs={cs}
                >
                    {def.t}
                    {def.selected && <Selection />}
                </SheetCell>
            );
        });
    });
    return out;
};

const Steps = () => (
    <StepButtons>
        <StepButton>+</StepButton>
        <StepButton>-</StepButton>
    </StepButtons>
);

const Field = ({ label, value, combo, focus, hot, shaded, h }: {
    label: string;
    value?: string;
    combo?: boolean;
    focus?: boolean;
    hot?: boolean;
    shaded?: boolean;
    h: number;
}) => (
    <FieldRow $h={h}>
        <FieldLabel $shaded={shaded}>{label}</FieldLabel>
        <ArrowButton $on={hot} />
        <RangeInput>{value}</RangeInput>
        {combo && (
            <ComboBox $on={focus}>
                <Chevron />
            </ComboBox>
        )}
    </FieldRow>
);

const App = () => (
    <Screen>
        <GlobalStyle />
        <AccentBar />
        <MenuRow>
            <MenuTab $w={80}>Fichier</MenuTab>
            <MenuTab $w={81}>Accueil</MenuTab>
            <MenuTab $w={94}>Insertion</MenuTab>
            <MenuTab $w={130}>Mise en page</MenuTab>
            <MenuTab $w={97}>Formules</MenuTab>
            <MenuTab $w={95}>Données</MenuTab>
            <MenuTab $w={91}>Révision</MenuTab>
            <MenuTab $w={99}>Affichage</MenuTab>
            <MenuTab $w={61}>Aide</MenuTab>
            <MenuTab $w={40} $active>QDV</MenuTab>
            <ShareBox $w={105} $ml={750}>Partager</ShareBox>
            <ShareBox $w={120} $ml={11}>Commentaires</ShareBox>
        </MenuRow>
        <Ribbon>
            <Group $w={43}>
                <SideIcons>
                    <HexIcon />
                    <BoardIcon />
                </SideIcons>
            </Group>
            <Group $w={176}>
                <GroupBody $pl={10}>
                    <BigButton $w={52} $off>
                        <BigIcon><DocIcon tone="#c9c9c9" line="#dedede" /></BigIcon>
                        Lier
                    </BigButton>
                    <BigButton $w={52}>
                        <BigIcon><DocIcon tone="#24bccb" line="#9fe3ea" slash /></BigIcon>
                        Délier
                    </BigButton>
                    <BigButton $w={52}>
                        <BigIcon><OpenIcon /></BigIcon>
                        Ouvrir
                    </BigButton>
                </GroupBody>
                <GroupLabel>Devis</GroupLabel>
            </Group>
            <Group $w={484}>
                <GroupBody $pl={6}>
                    <BigButton $w={70}>
                        <BigIcon><MetaIcon /></BigIcon>
                        Meta
                        <br />
                        Données
                    </BigButton>
                    <BigButton $w={46}>
                        <BigIcon><PhaseBadge $tone="#ffa500">1</PhaseBadge></BigIcon>
                        Phase
                        <br />
                        1
                    </BigButton>
                    <SmallColumn $w={114} $pl={7}>
                        <SmallButton><SmallIcon><DiamondIcon /></SmallIcon>Modèle</SmallButton>
                        <SmallButton><SmallIcon><AlertIcon /></SmallIcon>Anomalies</SmallButton>
                        <SmallButton><SmallIcon><LoadIcon /></SmallIcon>Charger</SmallButton>
                    </SmallColumn>
                    <SmallColumn $w={94}>
                        <SmallButton><SmallIcon><ClockIcon /></SmallIcon>Nettoyer</SmallButton>
                        <SmallButton><SmallIcon><SpreadIcon /></SmallIcon>Propager</SmallButton>
                    </SmallColumn>
                    <BigButton $w={72} $off>
                        <BigIcon><PhaseBadge $tone="#808080">2</PhaseBadge></BigIcon>
                        Générer
                        <br />
                        la phase 2
                    </BigButton>
                    <BigButton $w={72} $off>
                        <BigIcon><PhaseBadge $tone="#808080">3</PhaseBadge></BigIcon>
                        Générer
                        <br />
                        la phase 3
                    </BigButton>
                </GroupBody>
                <GroupLabel>Modèle</GroupLabel>
            </Group>
            <Group $w={186}>
                <GroupBody $pl={10}>
                    <BigButton $w={60}>
                        <BigIcon><ProtectIcon /></BigIcon>
                        Protéger
                    </BigButton>
                    <BigButton $w={56}>
                        <BigIcon><StylesIcon /></BigIcon>
                        Styles
                        <StylesCaret width="8" height="5" viewBox="0 0 8 5">
                            <path d="M1 1l3 3 3-3" fill="none" stroke="#444" strokeWidth="1.2" />
                        </StylesCaret>
                    </BigButton>
                    <BigButton $w={48}>
                        <BigIcon><PaneIcon /></BigIcon>
                        Volet
                    </BigButton>
                </GroupBody>
                <GroupLabel>Raccourcis Excel</GroupLabel>
            </Group>
            <Group $w={150}>
                <GroupBody $pl={7}>
                    <BigButton $w={84}>
                        <BigIcon><GearIcon /></BigIcon>
                        Paramètres
                    </BigButton>
                    <BigButton $w={46}>
                        <BigIcon><HelpBadge>?</HelpBadge></BigIcon>
                    </BigButton>
                </GroupBody>
            </Group>
        </Ribbon>
        <FormulaRow>
            <NameBox>
                G3
                <Caret />
            </NameBox>
            <Grip>
                <i />
                <i />
                <i />
            </Grip>
            <FormulaTools>
                <XIcon />
                <CheckIcon />
                <FxLabel>fx</FxLabel>
            </FormulaTools>
            <FormulaInput />
        </FormulaRow>
        <SheetGrid>{renderSheet()}</SheetGrid>
        <TabsBar>
            <NavArrows>
                <NavArrow $dir="l" />
                <NavArrow $dir="r" />
            </NavArrows>
            <SheetTab>Model</SheetTab>
            <AddSheet>+</AddSheet>
            <ScrollGrip>
                <i />
                <i />
                <i />
            </ScrollGrip>
            <ScrollTrack>
                <ScrollBack />
            </ScrollTrack>
        </TabsBar>
        <PaneWindow>
            <PaneTitleBar>
                <PaneTitle>QDV Tools for Excel</PaneTitle>
                <CloseButton>
                    <CloseGlyph />
                </CloseButton>
            </PaneTitleBar>
            <PaneBody>
                <PaneTabs>
                    <PaneTab $w={85} $active>Parametres</PaneTab>
                    <PaneTab $w={75}>Répartition</PaneTab>
                    <PaneTab $w={89}>Organisation</PaneTab>
                    <PaneTab $w={67}>Selection</PaneTab>
                </PaneTabs>
                <PanePage>
                    <ActionRow>
                        <ActionButton $w={79} $h={34} $ml={-1}>Sauver</ActionButton>
                        <ActionButton $w={81} $h={37} $ml={22}>Options</ActionButton>
                        <ActionButton $w={79} $h={34} $ml={0} $push>Exporter</ActionButton>
                        <ActionButton $w={79} $h={34} $ml={8}>Importer</ActionButton>
                    </ActionRow>
                    <SectionHead $mt={15} $mb={2}>
                        <SectionTitle>Paramètres de feuille</SectionTitle>
                    </SectionHead>
                    <Field h={22} label="Template sheet" value="Model" />
                    <Field h={22} label="Column to delete during copy" value="$Q:$Q" />
                    <Field h={22} label="Première ligne à dupliquer" value="$8:$8" />
                    <Field h={22} label="Total calculé" value="$P$19" />
                    <SectionHead $mt={14}>
                        <SectionTitle>Paramètres généraux</SectionTitle>
                        <Steps />
                    </SectionHead>
                    <SectionHead $mt={16}>
                        <SectionTitle>WBS</SectionTitle>
                    </SectionHead>
                    <Field h={25} label="Item" value="$B$3:$E$3" combo focus />
                    <Field h={25} label="Description" value="$B$4:$E$4" combo />
                    <Field h={25} label="Unité" value="$G$4" combo />
                    <Field h={25} label="Quantité" value="$G$3" combo hot />
                    <Field h={25} label="Prix unitaire de vente" combo />
                    <SectionHead $mt={1}>
                        <SectionTitle>Colonnes supplémentaires du WBS</SectionTitle>
                        <Steps />
                    </SectionHead>
                    <SectionHead $mt={18} $mb={-2}>
                        <SectionTitle>Minutes</SectionTitle>
                    </SectionHead>
                    <Field h={25} label="Colonne description" combo />
                    <Field h={25} label="Colonne unité" combo />
                    <Field h={25} label="Colonne quantité" combo />
                    <Field h={22} shaded label="First column to decompose" />
                    <Field h={22} shaded label="Second column to decompose" />
                    <Field h={22} shaded label="Third column to decompose" />
                    <Field h={22} shaded label="Fourth column to decompose" />
                    <Field h={22} shaded label="Fifth column to decompose" />
                    <Field h={22} shaded label="Sixth column to decompose" />
                    <SectionHead $mt={1}>
                        <SectionTitle>Colonnes supplémentaires de Minutes</SectionTitle>
                        <Steps />
                    </SectionHead>
                    <SectionHead $mt={15}>
                        <SectionTitle>Algorithmes</SectionTitle>
                        <Steps />
                    </SectionHead>
                    <SectionHead $mt={15}>
                        <SectionTitle>Coefficients</SectionTitle>
                        <Steps />
                    </SectionHead>
                </PanePage>
            </PaneBody>
            <GlassBand />
        </PaneWindow>
    </Screen>
);

export default App;
